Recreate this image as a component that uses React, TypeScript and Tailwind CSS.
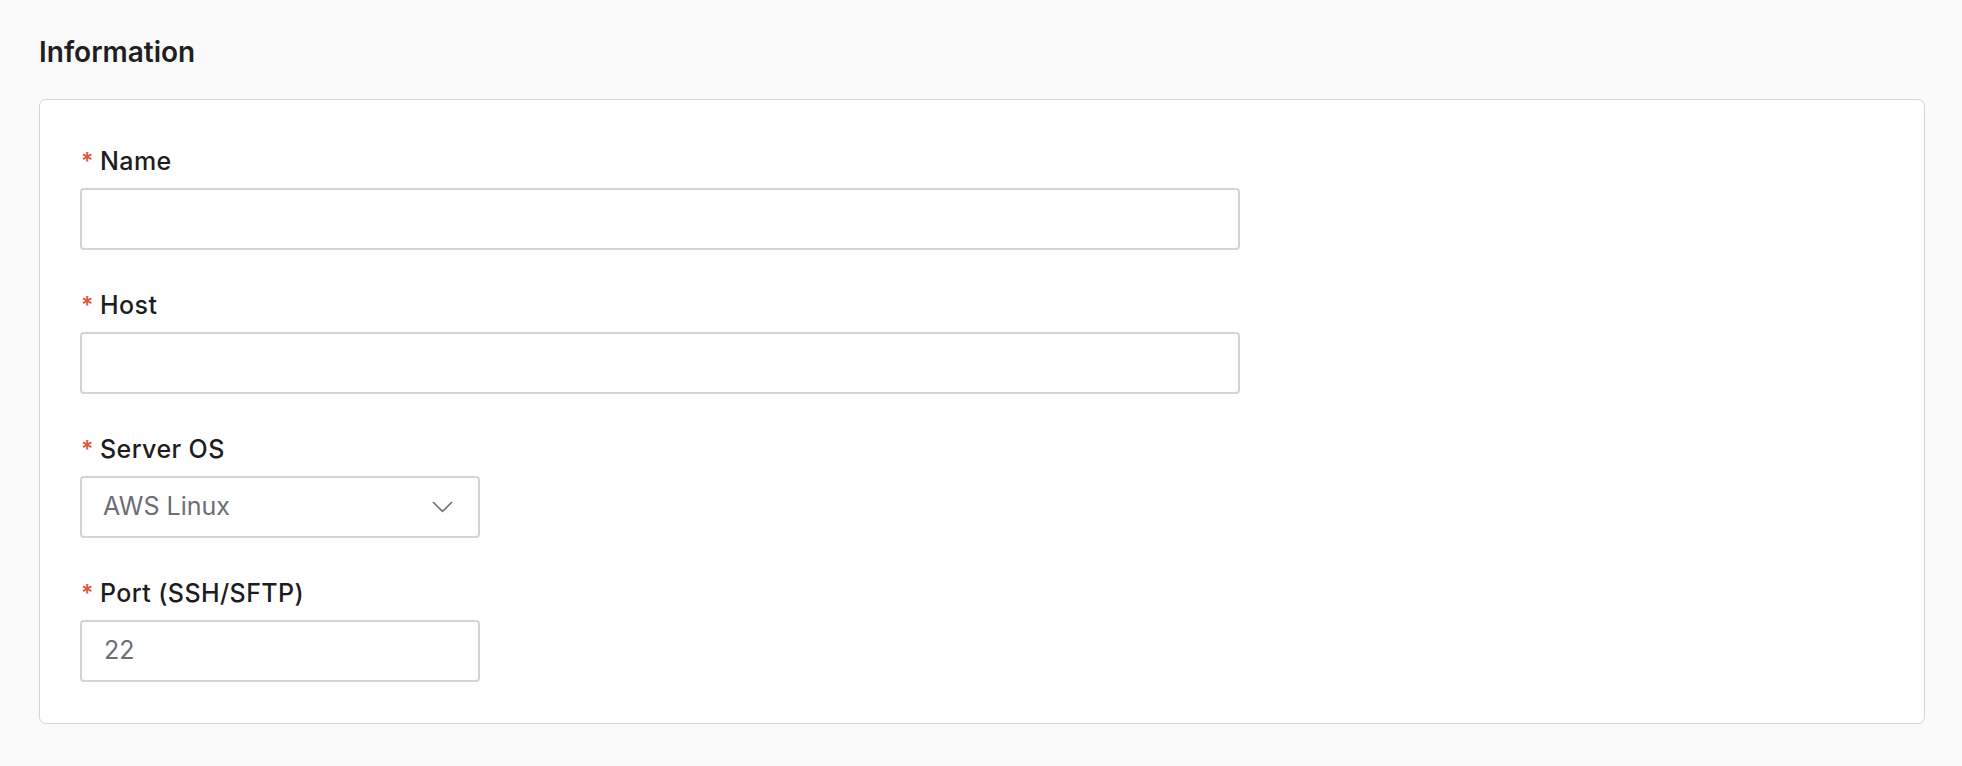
import React from "react";

const font = { fontFamily: "Inter, 'Noto Sans', 'Liberation Sans', sans-serif" };

function Label({ text }: { text: string }) {
  return (
    <div className="flex items-baseline h-[32px] leading-[32px] text-[25px] font-medium tracking-[0.4px] text-[#1d1d1f]">
      <span className="inline-block w-[20px] text-[#e0533c] text-[23px] font-semibold relative top-[-1px] pl-[1px]">*</span>
      <span>{text}</span>
    </div>
  );
}

function Field({ label, children }: { label: string; children: React.ReactNode }) {
  return (
    <div className="flex flex-col gap-[11px]">
      <Label text={label} />
      {children}
    </div>
  );
}

export default function App() {
  return (
    <div className="min-h-screen bg-[#fafafa] pl-[39px] pr-[37px] pt-[34px]" style={font}>
      <h2 className="h-[36px] leading-[36px] text-[28px] font-semibold text-[#1f1f22] mb-[29px]">Information</h2>
      <div className="bg-white border border-[#d4d4d8] rounded-[7px] pl-[40px] pr-[40px] pt-[45px] pb-[41px]">
        <div className="flex flex-col gap-[39px]">
          <Field label="Name">
            <div className="w-[1160px] h-[62px] border-2 border-[#d4d4d8] rounded-[4px] bg-white" />
          </Field>
          <Field label="Host">
            <div className="w-[1160px] h-[62px] border-2 border-[#d4d4d8] rounded-[4px] bg-white" />
          </Field>
          <Field label="Server OS">
            <div className="w-[400px] h-[62px] border-2 border-[#d4d4d8] rounded-[4px] bg-white flex items-center justify-between pl-[21px] pr-[25px]">
              <span className="text-[25px] text-[#6b6e76]">AWS Linux</span>
              <svg width="21" height="12" viewBox="0 0 21 12" fill="none">
                <polyline points="1.5,1.5 10.5,10.5 19.5,1.5" stroke="#6b6e76" strokeWidth="1.6" strokeLinecap="round" strokeLinejoin="round" />
              </svg>
            </div>
          </Field>
          <Field label="Port (SSH/SFTP)">
            <div className="w-[400px] h-[62px] border-2 border-[#d4d4d8] rounded-[4px] bg-white flex items-center pl-[22px]">
              <span className="text-[25px] text-[#6b6e76]">22</span>
            </div>
          </Field>
        </div>
      </div>
    </div>
  );
}
